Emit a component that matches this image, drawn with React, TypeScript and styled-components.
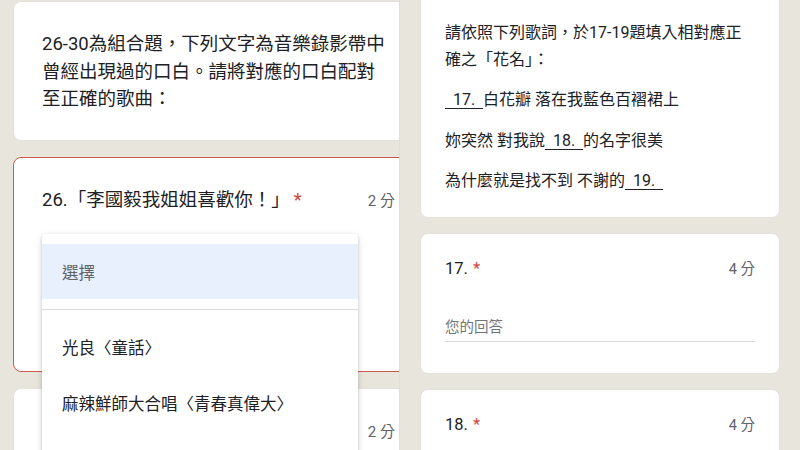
import React from 'react';
import styled, { createGlobalStyle } from 'styled-components';

const GlobalStyle = createGlobalStyle`
  html, body {
    margin: 0;
    padding: 0;
    background: #e8e5dd;
  }
  * {
    box-sizing: border-box;
  }
`;

const font = `Roboto, "Noto Sans CJK TC", "Noto Sans", sans-serif`;

const Screen = styled.div`
  display: flex;
  width: 800px;
  height: 450px;
  overflow: hidden;
  background: #e8e5dd;
  font-family: ${font};
  color: #202124;
`;

const Pane = styled.div`
  position: relative;
  width: 400px;
  height: 450px;
  overflow: hidden;
  flex-shrink: 0;
  border-right: 1px solid #e1ded5;
`;

const LeftStack = styled.div`
  display: flex;
  flex-direction: column;
  gap: 16px;
  padding: 1px 0 0 13px;
`;

const RightStack = styled.div`
  display: flex;
  flex-direction: column;
  gap: 15px;
  margin-top: -12px;
  padding-left: 20px;
`;

const Card = styled.section<{ $error?: boolean }>`
  flex-shrink: 0;
  background: #fff;
  border-radius: 8px;
  border: 1px solid ${(p) => (p.$error ? '#cc5a48' : '#e4e2dc')};
`;

const LeftCard = styled(Card)<{ $height?: number }>`
  width: 411px;
  padding: 29px 28px 26px;
  font-size: 18.5px;
  ${(p) => (p.$height ? `height: ${p.$height}px;` : '')}
`;

const RightCard = styled(Card)<{ $height?: number }>`
  width: 360px;
  padding: 23px 24px 22px;
  font-size: 16px;
  ${(p) => (p.$height ? `height: ${p.$height}px;` : '')}
`;

const Intro = styled.p`
  margin: 0;
  max-width: 350px;
  line-height: 27.5px;
`;

const Header = styled.div<{ $size: number; $line: number }>`
  display: flex;
  align-items: baseline;
  font-size: ${(p) => p.$size}px;
  line-height: ${(p) => p.$line}px;
`;

const Title = styled.span`
  white-space: nowrap;
`;

const Star = styled.span<{ $gap: number }>`
  margin-left: ${(p) => p.$gap}px;
  color: #d0443a;
`;

const Points = styled.span<{ $size: number }>`
  margin-left: auto;
  font-size: ${(p) => p.$size}px;
  color: #5f6368;
  white-space: nowrap;
`;

const Lyrics = styled.div`
  padding-top: 8px;
  p {
    margin: 0 0 14px;
    line-height: 26.5px;
  }
  p:last-child {
    margin-bottom: 0;
  }
`;

const Blank = styled.span`
  text-decoration: underline;
  text-underline-offset: 3px;
  text-decoration-thickness: 1px;
  white-space: pre;
`;

const Answer = styled.div`
  margin-top: 35px;
  padding-bottom: 2px;
  border-bottom: 1px solid #dadce0;
  font-size: 14.5px;
  line-height: 22px;
  color: #70757a;
`;

const Menu = styled.div`
  position: absolute;
  left: 42px;
  top: 234px;
  width: 316px;
  height: 240px;
  padding-top: 10px;
  background: #fff;
  border-radius: 4px;
  box-shadow: 0 1px 3px rgba(0, 0, 0, 0.18), 0 3px 10px rgba(0, 0, 0, 0.12);
  font-size: 16.5px;
`;

const Option = styled.div<{ $active?: boolean; $height: number }>`
  display: flex;
  align-items: center;
  height: ${(p) => p.$height}px;
  padding-left: 20px;
  background: ${(p) => (p.$active ? '#e8f0fe' : 'transparent')};
  color: ${(p) => (p.$active ? '#5f6368' : '#202124')};
`;

const Divider = styled.div`
  height: 1px;
  margin: 10px 0 9px;
  background: #dadce0;
`;

const options = ['光良〈童話〉', '麻辣鮮師大合唱〈青春真偉大〉'];

const App = () => {
  return (
    <>
      <GlobalStyle />
      <Screen>
        <Pane>
          <LeftStack>
            <LeftCard $height={140}>
              <Intro>
                26-30為組合題，下列文字為音樂錄影帶中曾經出現過的口白。請將對應的口白配對至正確的歌曲：
              </Intro>
            </LeftCard>
            <LeftCard $error $height={215}>
              <Header $size={18.5} $line={26}>
                <Title>26.「李國毅我姐姐喜歡你！」</Title>
                <Star $gap={4}>*</Star>
                <Points $size={15}>2 分</Points>
              </Header>
            </LeftCard>
            <LeftCard $height={160}>
              <Header $size={18.5} $line={26}>
                <Title>27.「我們一起走過的那些日子」</Title>
                <Star $gap={4}>*</Star>
                <Points $size={15}>2 分</Points>
              </Header>
            </LeftCard>
          </LeftStack>
          <Menu>
            <Option $active $height={55}>選擇</Option>
            <Divider />
            {options.map((o) => (
              <Option key={o} $height={56}>
                {o}
              </Option>
            ))}
          </Menu>
        </Pane>
        <RightStack>
          <RightCard $height={230}>
            <Lyrics>
              <p>請依照下列歌詞，於17-19題填入相對應正確之「花名」：</p>
              <p>
                <Blank>{'  17.  '}</Blank>白花瓣 落在我藍色百褶裙上
              </p>
              <p>
                妳突然 對我說<Blank>{'  18.  '}</Blank>的名字很美
              </p>
              <p>
                為什麼就是找不到 不謝的<Blank>{'  19.  '}</Blank>
              </p>
            </Lyrics>
          </RightCard>
          <RightCard $height={141}>
            <Header $size={16.5} $line={24}>
              <Title>17.</Title>
              <Star $gap={5}>*</Star>
              <Points $size={14.5}>4 分</Points>
            </Header>
            <Answer>您的回答</Answer>
          </RightCard>
          <RightCard $height={141}>
            <Header $size={16.5} $line={24}>
              <Title>18.</Title>
              <Star $gap={5}>*</Star>
              <Points $size={14.5}>4 分</Points>
            </Header>
          </RightCard>
        </RightStack>
      </Screen>
    </>
  );
};

export default App;
